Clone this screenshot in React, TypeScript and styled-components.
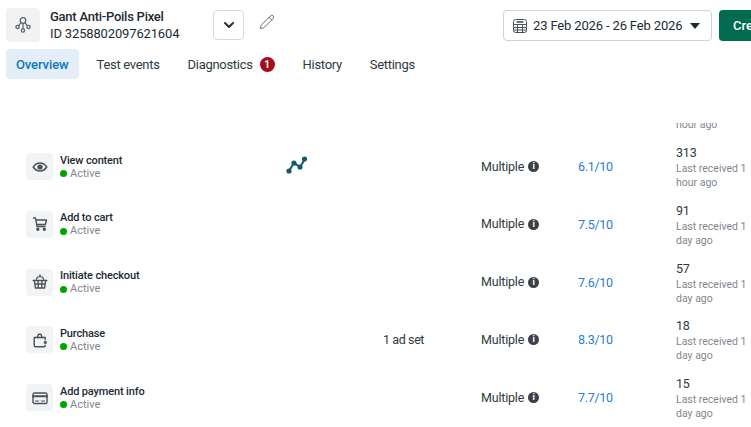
import React, {useLayoutEffect, useRef} from "react";
import styled, {createGlobalStyle} from "styled-components";
import {ChevronDown, Pencil} from "lucide-react";

type EventType = {
    name: string
    icon: React.ReactNode
    trend?: boolean
    adSets?: string
    score: string
    count: string
    last: string
}

const EventSvg = ({children}: { children: React.ReactNode }) => (
    <svg width="16" height="16" viewBox="0 0 16 16" fill="none" stroke="#4b5159" strokeWidth="1.4" strokeLinecap="round" strokeLinejoin="round">
        {children}
    </svg>
)

const EyeIcon = () => (
    <EventSvg>
        <path d="M1.200 8C3 5.300 5.300 4 8 4s5 1.300 6.800 4C13 10.700 10.700 12 8 12S3 10.700 1.200 8z"/>
        <circle cx="8" cy="8" r="2.600" fill="#4b5159" stroke="none"/>
    </EventSvg>
)
const CartIcon = () => (
    <EventSvg>
        <path d="M1.500 2h2l1.500 8.500h8M4 4h10.500l-1.200 4.500H4.800"/>
        <circle cx="5.800" cy="13.200" r="1" fill="#4b5159"/>
        <circle cx="12.300" cy="13.200" r="1" fill="#4b5159"/>
    </EventSvg>
)
const BasketIcon = () => (
    <EventSvg>
        <path d="M4 6.500C4.500 3.800 6 2.500 8 2.500s3.500 1.300 4 4" strokeWidth="1.100"/>
        <path d="M8 1v1.500"/>
        <path d="M1.200 6.500h13.600M2.300 6.500l1.100 7.500h9.200l1.100-7.500M2.800 10h10.400M6 6.500 6.400 14M10 6.500 9.600 14"/>
    </EventSvg>
)
const PurchaseIcon = () => (
    <EventSvg>
        <path d="M2.200 5.500h11v8a1.300 1.300 0 0 1-1.300 1.300H3.500a1.300 1.300 0 0 1-1.300-1.300z"/>
        <path d="M5.300 5.500 6.500 2.200h2.400l1.200 3.300"/>
        <circle cx="13.400" cy="10.400" r="2.100" fill="#4b5159" stroke="#f2f3f5" strokeWidth="1"/>
    </EventSvg>
)
const CardIcon = () => (
    <EventSvg>
        <rect x="1" y="3" width="14" height="10.500" rx="1.600"/>
        <path d="M1 6.200h14" strokeWidth="2"/>
        <path d="M3.500 11h3M9.500 11h3" strokeWidth="1"/>
    </EventSvg>
)

const events: Array<EventType> = [
    {name: "Page view", icon: <EyeIcon/>, score: "6.0/10", count: "540", last: "hour ago"},
    {name: "View content", icon: <EyeIcon/>, trend: true, score: "6.1/10", count: "313", last: "hour ago"},
    {name: "Add to cart", icon: <CartIcon/>, score: "7.5/10", count: "91", last: "day ago"},
    {name: "Initiate checkout", icon: <BasketIcon/>, score: "7.6/10", count: "57", last: "day ago"},
    {name: "Purchase", icon: <PurchaseIcon/>, adSets: "1 ad set", score: "8.3/10", count: "18", last: "day ago"},
    {name: "Add payment info", icon: <CardIcon/>, score: "7.7/10", count: "15", last: "day ago"},
]

export default function App() {
    const bodyRef = useRef<HTMLDivElement>(null)

    useLayoutEffect(() => {
        if (bodyRef.current) bodyRef.current.scrollTop = 43
    }, [])

    return (
        <Page>
            <GlobalStyle/>
            <Header>
                <PixelBadge>
                    <svg width="18" height="18" viewBox="0 0 18 18" fill="none" stroke="#5f666e" strokeWidth="1.3">
                        <circle cx="9" cy="4.500" r="2.800"/>
                        <circle cx="3.500" cy="11" r="1.600"/>
                        <circle cx="14.500" cy="11" r="1.600"/>
                        <circle cx="9" cy="14.500" r="1.600"/>
                        <path d="M9 7.300v5.600M7 6.500 4.800 9.800M11 6.500l2.200 3.300"/>
                    </svg>
                </PixelBadge>
                <PixelInfo>
                    <PixelName>Gant Anti-Poils Pixel</PixelName>
                    <PixelId>ID 3258802097621604</PixelId>
                </PixelInfo>
                <SquareButton><ChevronDown size={16} strokeWidth={3} color="#2b3036"/></SquareButton>
                <EditIcon><Pencil size={16} strokeWidth={1.4} color="#5f666e"/></EditIcon>
                <DateButton>
                    <CalendarIcon width="14" height="14" viewBox="0 0 14 14" fill="none" stroke="#4b5159" strokeWidth="1">
                        <rect x="0.500" y="0.500" width="13" height="13" rx="2"/>
                        <path d="M.5 5.500h13M.5 8.500h13M.5 11h13M4.500 5.500v8M9.500 5.500v8"/>
                        <path d="M3.500 3h7" strokeWidth="1.600"/>
                    </CalendarIcon>
                    <DateText>23 Feb 2026 - 26 Feb 2026</DateText>
                    <Caret/>
                </DateButton>
                <CreateButton>Create</CreateButton>
            </Header>
            <Tabs>
                <Tab $active>Overview</Tab>
                <Tab>Test events</Tab>
                <Tab>Diagnostics<Count>1</Count></Tab>
                <Tab>History</Tab>
                <Tab>Settings</Tab>
            </Tabs>
            <TableBody ref={bodyRef}>
                {events.map(event => (
                    <Row key={event.name}>
                        <EventCell>
                            <EventIcon>{event.icon}</EventIcon>
                            <div>
                                <EventName>{event.name}</EventName>
                                <Status><Dot/>Active</Status>
                            </div>
                        </EventCell>
                        <div>
                            {event.trend && (
                                <svg width="21" height="18" viewBox="0 0 21 18" fill="none" stroke="#14596b" strokeWidth="2">
                                    <path d="M3 15 8 7l6 4 5-8"/>
                                    <g fill="#14596b" stroke="none">
                                        <circle cx="3" cy="15" r="2.600"/>
                                        <circle cx="8" cy="7" r="2.600"/>
                                        <circle cx="14" cy="11" r="2.600"/>
                                        <circle cx="18.500" cy="3" r="2.600"/>
                                    </g>
                                </svg>
                            )}
                        </div>
                        <AdSets>{event.adSets}</AdSets>
                        <Cell>
                            Multiple
                            <InfoDot>i</InfoDot>
                        </Cell>
                        <Score>{event.score}</Score>
                        <LastCell>
                            <Cell>{event.count}</Cell>
                            <LastReceived>Last received 1 {event.last}</LastReceived>
                        </LastCell>
                    </Row>
                ))}
            </TableBody>
        </Page>
    )
}

const GlobalStyle = createGlobalStyle`
  html, body {
    margin: 0;
    padding: 0;
    background: #fff;
    overflow: hidden;
  }
`
const Page = styled.div`
  width: 751px;
  height: 427px;
  overflow: hidden;
  display: flex;
  flex-direction: column;
  font-family: Roboto, "Noto Sans", sans-serif;
  color: #1c2b33;
`
const Header = styled.div`
  display: flex;
  align-items: flex-start;
  padding: 8px 0 0 6px;
  height: 49px;
  box-sizing: border-box;
  flex-shrink: 0;
  white-space: nowrap;
`
const PixelBadge = styled.div`
  width: 34px;
  height: 34px;
  border-radius: 4px;
  background: #f0f2f4;
  display: flex;
  align-items: center;
  justify-content: center;
  flex-shrink: 0;
`
const PixelInfo = styled.div`
  margin-left: 10px;
  width: 163px;
  flex-shrink: 0;
`
const PixelName = styled.div`
  font-size: 13px;
  font-weight: 500;
  letter-spacing: -0.25px;
  line-height: 17px;
`
const PixelId = styled.div`
  font-size: 13px;
  letter-spacing: -0.15px;
  line-height: 17px;
`
const SquareButton = styled.div`
  width: 31px;
  height: 30px;
  margin-top: 2px;
  box-sizing: border-box;
  border: 1px solid #d5d9dd;
  border-radius: 4px;
  display: flex;
  align-items: center;
  justify-content: center;
  flex-shrink: 0;
`
const EditIcon = styled.div`
  margin: 6px 0 0 15px;
  width: 16px;
  height: 16px;
  flex-shrink: 0;
`
const DateButton = styled.div`
  margin: 2px 0 0 228px;
  width: 209px;
  height: 31px;
  box-sizing: border-box;
  border: 1px solid #cbd2d9;
  border-radius: 4px;
  display: flex;
  align-items: center;
  padding: 0 9px;
  flex-shrink: 0;
`
const CalendarIcon = styled.svg`
  flex-shrink: 0;
`
const DateText = styled.span`
  margin-left: 6px;
  font-size: 13px;
  letter-spacing: -0.15px;
  flex: 1;
`
const Caret = styled.span`
  width: 0;
  height: 0;
  border-left: 5px solid transparent;
  border-right: 5px solid transparent;
  border-top: 6px solid #1c2b33;
  margin-right: 2px;
`
const CreateButton = styled.div`
  margin: 2px 0 0 7px;
  width: 80px;
  height: 31px;
  padding-left: 14px;
  box-sizing: border-box;
  border-radius: 4px;
  background: #006b4f;
  color: #fff;
  font-size: 13px;
  font-weight: 500;
  line-height: 31px;
  flex-shrink: 0;
`
const Tabs = styled.div`
  display: flex;
  gap: 8px;
  padding-left: 6px;
  flex-shrink: 0;
`
const Tab = styled.div<{ $active?: boolean }>`
  height: 30px;
  padding: 0 10px;
  display: flex;
  align-items: center;
  border-radius: 4px;
  font-size: 13px;
  letter-spacing: ${props => props.$active ? "-0.1px" : "-0.3px"};
  font-weight: ${props => props.$active ? 500 : 400};
  color: ${props => props.$active ? "#0a78be" : "#2f3a42"};
  background: ${props => props.$active ? "#e3eef8" : "transparent"};
`
const Count = styled.span`
  width: 15px;
  height: 15px;
  margin-left: 7px;
  border-radius: 50%;
  background: #a50e1c;
  color: #fff;
  font-size: 10px;
  font-weight: 700;
  display: flex;
  align-items: center;
  justify-content: center;
`
const TableBody = styled.div`
  margin-top: 44px;
  height: 304px;
  padding-bottom: 30px;
  box-sizing: border-box;
  overflow: hidden;
  flex-shrink: 0;
`
const Row = styled.div`
  display: grid;
  grid-template-columns: 260px 97px 98px 97px 98px 75px;
  align-items: center;
  height: 57.75px;
  padding-left: 26px;
`
const EventCell = styled.div`
  display: flex;
  align-items: center;
  gap: 7px;
`
const EventIcon = styled.div`
  width: 27px;
  height: 27px;
  border-radius: 4px;
  background: #f2f3f5;
  display: flex;
  align-items: center;
  justify-content: center;
`
const EventName = styled.div`
  font-size: 11px;
  font-weight: 500;
  letter-spacing: -0.15px;
  line-height: 14px;
  margin: 1px 0 -1px;
`
const Status = styled.div`
  display: flex;
  align-items: center;
  gap: 3px;
  font-size: 11px;
  line-height: 14px;
  color: #7f878e;
`
const Dot = styled.span`
  width: 7px;
  height: 7px;
  border-radius: 50%;
  background: #00a400;
`
const Cell = styled.div`
  display: flex;
  align-items: center;
  gap: 4px;
  font-size: 12.500px;
  letter-spacing: -0.2px;
  line-height: 16px;
  color: #2f3a42;
`
const AdSets = styled(Cell)`
  letter-spacing: -0.4px;
`
const InfoDot = styled.span`
  width: 11px;
  height: 11px;
  border-radius: 50%;
  background: #3c4148;
  color: #fff;
  font-size: 9px;
  font-weight: 700;
  line-height: 11px;
  text-align: center;
`
const Score = styled.div`
  font-size: 12.500px;
  letter-spacing: -0.3px;
  color: #1f7fcc;
`
const LastCell = styled.div`
  padding-top: 2px;
`
const LastReceived = styled.div`
  margin-top: 1px;
  font-size: 10.500px;
  line-height: 14px;
  color: #7f878e;
`
